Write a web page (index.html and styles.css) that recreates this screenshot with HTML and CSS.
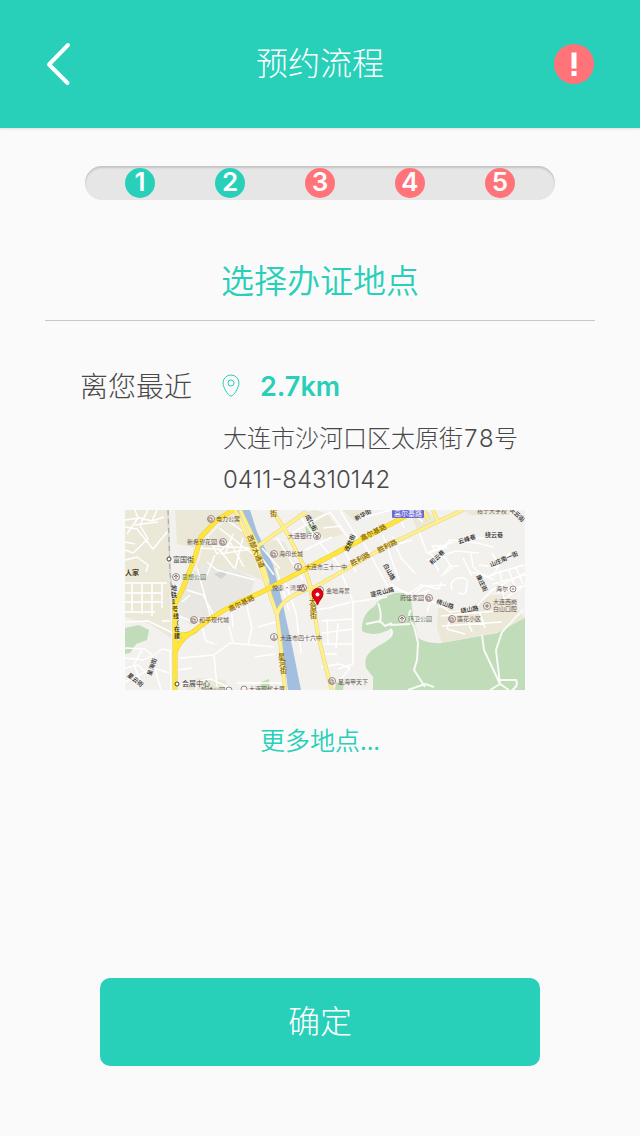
FILE: index.html
```html
<!DOCTYPE html>
<html lang="zh-CN">
<head>
<meta charset="utf-8">
<meta name="viewport" content="width=device-width, initial-scale=1">
<title>预约流程</title>
<link rel="stylesheet" href="styles.css">
</head>
<body>
<header class="topbar">
  <button class="icon-button" type="button" aria-label="返回">
    <svg width="28" height="46" viewBox="0 0 28 46"><path class="chevron" d="M22 4 3 23.500 21.500 42"/></svg>
  </button>
  <h1 class="topbar-title">预约流程</h1>
  <button class="icon-button" type="button" aria-label="提示">
    <svg width="40" height="40" viewBox="0 0 40 40"><circle class="alert-disc" cx="20" cy="20" r="20"/><path fill="#fff" d="M17.500 8.500h5v16h-5zM17.500 27h5v5h-5z"/></svg>
  </button>
</header>
<main class="content">
  <ol class="steps">
    <li class="step step-done">1</li>
    <li class="step step-done">2</li>
    <li class="step">3</li>
    <li class="step">4</li>
    <li class="step">5</li>
  </ol>
  <h2 class="heading">选择办证地点</h2>
  <section class="place">
    <h3 class="place-label">离您最近</h3>
    <div class="place-detail">
      <p class="distance">
        <svg class="pin" width="18" height="24" viewBox="0 0 18 24"><path d="M9 22C6 22 1 13 1 9a8 8 0 0 1 16 0c0 4-5 13-8 13z"/><circle cx="9" cy="9" r="3"/></svg>
        <span class="distance-value">2.7km</span>
      </p>
      <p class="address">大连市沙河口区太原街78号</p>
      <p class="phone">0411-84310142</p>
    </div>
  </section>
  <svg class="map" viewBox="0 0 400 180" role="img" aria-label="地图">
    <rect width="400" height="180" fill="#f3f1ee"/>
    <g fill="#ebe8d8">
      <path d="M0 0H43L46 128 25 114 0 107z"/>
      <path d="M50 0H105L87 14 72 38 52 34z"/>
      <path d="M80 30 108 3 113 4 137 70 109 58 72 57z"/>
      <path d="M133 38 147 30 160 32 172 60 152 70zM186 12 202 4 218 24 200 30zM172 4 190 0 200 3 187 10zM218 0H248L230 12z"/>
      <path d="M313 98 340 100 366 85H382L400 108 382 120 317 133 312 118z"/>
      <path d="M338 0H385V5H345zM285 3 304 2 312 12 292 20z"/>
      <path d="M62 176 72 168 100 170 104 180H62z"/>
    </g>
    <path fill="#e8e7e2" d="M72 57 109 58 130 69 126 83 82 106 66 115 54 105 53 92 61 75z"/>
    <path fill="#d4d4d2" d="M89 64 101 60 101 65 96 69z"/>
    <g fill="#c1dcb8">
      <path d="M0 118 14 115 24 120 22 130 11 134 5 143 0 144z"/>
      <path d="M270 83H285L288 105 293 128Q302 134 317 133L372 123 400 108V180H248V167L241 158Q237 144 255 135T266 119Q248 128 237 121 236 104 250 96 252 89 270 83z"/>
      <path d="M136 172 144 169 145 180H135zM211 172 219 173 218 180H210zM180 13 190 15 189 24 181 23z"/>
    </g>
    <path fill="#a3bfdf" d="M112 0H125L132 22 148 55 158 95 168 140 176 180H163L158 140 152 110 142 62 130 30z"/>
    <g class="lane">
      <path d="M0 10 15 8 27 11 39 7M10 0 13 8 2 24M0 17 12 19 28 39 43 21M10 15 33 12M23 0 15 15 23 29 8 43 0 40M0 50 12 47 23 55 21 62M0 62 4 64M32 0 27 11M0 32 10 34"/>
      <path d="M0 73H42M0 83H37M0 92H36M0 102H30M7 74V102M17 73V104M27 73V106M37 73V98M0 112 23 111 50 124M37 111H45"/>
      <path d="M0 138 20 139 27 145 29 157M0 148 18 150 28 146M0 158 13 155 23 165M17 140 9 154 16 174M29 145 37 139 47 141M25 157 44 163M0 172 24 160M30 158 36 180M45 140 46 180"/>
      <path d="M72 38 94 39 109 58M83 27 92 44 105 32 119 57M94 18 128 44M103 11 132 31M88 36 125 38M95 44 133 38M108 24 100 44M118 28 110 59M72 58 86 108M62 80 78 85 89 105M82 52 92 60 130 70M57 92 65 85M54 106 66 111 78 107M90 45 82 65"/>
      <path d="M55 148 89 145 105 133 149 137M89 145 92 177M77 117 81 131 90 134M104 116 108 132M52 160 67 158M56 174 86 169 105 178M112 173H158M71 171V180M122 96 127 118 123 135M106 97 108 117"/>
      <path d="M136 47 149 65M137 38 155 59M152 28 178 70M165 24 205 2 227 33M180 40 207 27M174 5 197 36 210 50M198 18 217 16M215 0 233 30M230 10 266 0M160 72 171 103 176 143M151 58 164 100M130 147 150 144M133 117 151 112M206 41 215 59 228 92M218 38 231 62M236 28 263 77 287 84M258 25 274 70M270 35 287 30M228 92 262 87M228 92V154L213 159M226 92 203 98M191 100 209 97M196 111 228 109M197 123 228 119M198 134 228 134M200 144 212 144M213 113 211 138M196 157 214 154 225 158 213 173M202 109 203 133M179 126 193 132"/>
      <path d="M267 26 276 48 290 63M272 0 279 18M284 0 298 12M293 19 302 43 322 37M304 43 322 34 338 29 373 27M303 42 310 48 331 41 354 43M318 38 325 30 352 33 369 37M310 40 307 36 322 36M302 50 320 47 327 58 316 66M307 49 314 61M338 48 347 66M346 43 348 57 360 67 369 65 374 55 367 43M354 55 371 57 385 43M365 65 399 55M375 60 379 89 400 75M368 74 400 65M372 83 397 76M384 60 391 80M391 57 398 74"/>
      <path d="M265 74 284 85 312 93M285 83 296 75 314 79 316 72M290 83 298 76 321 75M293 84 305 80M300 82 305 93 302 102M312 93 325 102 349 99 367 80 400 63M318 64 325 56 334 56M327 80Q324 70 334 68T342 77 333 82M344 62 356 64 369 70M316 106 371 101M317 116 377 112M325 108 322 119 340 124M341 106 347 122M355 103 360 118"/>
    </g>
    <g class="path-green">
      <path d="M253 93Q258 107 254 113M241 114 255 111 260 116 267 113M286 100Q281 105 289 116L293 133 292 150 289 160 300 177M265 115 285 114M265 127Q269 121 265 119M283 180 300 174 309 177M357 125 359 140 375 174 365 180M398 100 390 108 377 122 371 140 375 174M374 170 391 170Q394 176 387 180M375 174 384 180"/>
    </g>
    <path class="rail" d="M43 0 45 62 50 118 51 180"/>
    <path class="rail-dash" d="M43 0 45 62 50 118 51 180"/>
    <g class="road-case">
      <path d="M130 38 181 2M110 0 135 55 152 105M147 0 162 23 180 58 185 75 193 125 202 162 207 180M338 0 265 34 190 77Q155 87 152 105L155 128 160 180M299 0 303 10M308 0 313 12M115 0 131 33 143 72"/>
    </g>
    <g class="road-light">
      <path d="M130 38 181 2M110 0 135 55 152 105M147 0 162 23 180 58 185 75 193 125 202 162 207 180M338 0 265 34 190 77Q155 87 152 105L155 128 160 180M299 0 303 10M308 0 313 12M115 0 131 33 143 72"/>
    </g>
    <path class="main-case" d="M108 0 90 12 76 27 69 50 58 78 50 94V180M50 124Q64 128 74 117 98 98 135 83L173 63 230 33 292 0M50 144Q52 133 64 124"/>
    <path class="main" d="M108 0 90 12 76 27 69 50 58 78 50 94V180M50 124Q64 128 74 117 98 98 135 83L173 63 230 33 292 0M50 144Q52 133 64 124"/>
    <g class="marks">
      <circle cx="86" cy="9" r="3.500"/><circle cx="98" cy="32" r="3.500"/><circle cx="51" cy="67" r="3.500"/><circle cx="69" cy="110" r="3.500"/>
      <circle cx="192" cy="26" r="3.500"/><circle cx="149" cy="44" r="3.500"/><circle cx="173" cy="57" r="3.500"/><circle cx="178" cy="78" r="3.500"/><circle cx="195" cy="80" r="3.500"/><circle cx="149" cy="127" r="3.500"/><circle cx="207" cy="171" r="3.500"/>
      <circle cx="304" cy="88" r="3.500"/><circle cx="277" cy="109" r="3.500"/><circle cx="327" cy="109" r="3.500"/><circle cx="362" cy="96" r="3.500"/><circle cx="388" cy="79" r="3"/>
      <circle cx="104" cy="180" r="3"/><circle cx="119" cy="179" r="3"/>
    </g>
    <path class="glyphs" d="M84 7v4h4M86 7v2h2M96 30v4h4M98 30v2h2M67 108v4h4M69 108v2h2M147 42v4h4M149 42v2h2M205 169v4h4M207 169v2h2M302 86v4h4M304 86v2h2M325 107v4h4M327 107v2h2M190 24l2 2 2-2M190 27h4M192 26v3M171 59h4M173 55v3M147 129h4M149 125v3M176 80h4l-2-5zM193 82l2-4 2 4M360 96h4M362 94v4M388 78v2M51 65v4M49 67l2-2 2 2M277 107v4M275 109l2-2 2 2"/>
    <g class="stations"><circle cx="44" cy="49" r="2"/><circle cx="52" cy="174" r="2"/></g>
    <g class="labels">
      <text x="91" y="11">电力公寓</text><text x="62" y="34">新希望花园</text><text x="57" y="69" fill="#5d7b5c">思想公园</text><text x="74" y="112">和平现代城</text>
      <text x="163" y="28">大连银行</text><text x="154" y="46">海印长城</text><text x="180" y="59">大连市三十一中</text><text x="147" y="80">悦泰·湾里</text><text x="201" y="83">金地海景</text><text x="155" y="130">大连市四十六中</text><text x="213" y="174">星海甲天下</text>
      <text x="275" y="90">府佳家园</text><text x="283" y="111" fill="#5d7b5c">环卫公园</text><text x="332" y="111">莲花小区</text><text x="371" y="81">海尔</text><text x="368" y="94">大连西岗</text><text x="368" y="101">白山口腔</text><text x="352" y="3">格宁大学校</text><text x="76" y="182">锦绣公园</text><text x="124" y="181">大连现代大厦</text>
      <text class="label-stop" x="48" y="52">富国街</text><text class="label-stop" x="57" y="176">会展中心</text>
      <text class="label-area" x="0" y="65">人家</text>
    </g>
    <g class="streets">
      <text transform="translate(2 166) rotate(38)">星云街</text><text transform="translate(26 166) rotate(-70)">星海街</text>
      <text transform="translate(180 6) rotate(62)">成仁街</text><text transform="translate(231 11) rotate(-28)">新华街</text><text transform="translate(223 42) rotate(-65)">连胜街</text><text transform="translate(258 55) rotate(61)">白山路</text><text transform="translate(246 87) rotate(-14)">莲花山路</text>
      <text transform="translate(307 55) rotate(-43)">和云巷</text><text transform="translate(334 34) rotate(-18)">云峰巷</text><text x="360" y="27">绕云巷</text><text transform="translate(366 57) rotate(-23)">山庄南一街</text><text transform="translate(351 66) rotate(64)">康庄街</text><text transform="translate(311 93) rotate(20)">绕山路</text><text transform="translate(336 103) rotate(-10)">绕山路</text><text transform="translate(384 0) rotate(43)">长云街</text>
      <text x="46" y="80">地</text><text x="46" y="87">铁</text><text x="47" y="94">1</text><text x="47" y="101">号</text><text x="48" y="108">线</text><text x="48" y="115">（</text><text x="49" y="121">在</text><text x="49" y="128">建</text>
    </g>
    <g class="roads">
      <text transform="translate(105 102) rotate(-27)">高尔基路</text><text transform="translate(237 31) rotate(-27)">高尔基路</text><text transform="translate(227 56) rotate(-28)">胜利路</text><text transform="translate(254 43) rotate(-27)">胜利路</text>
      <text transform="translate(122 26) rotate(68)">西部大通道</text><text x="145" y="6">街</text>
      <text x="184" y="94">太</text><text x="185" y="101">原</text><text x="185" y="108">街</text>
      <text x="153" y="149">星</text><text x="154" y="156">河</text><text x="155" y="163">街</text>
    </g>
    <rect x="267" y="0" width="32" height="8" rx="1" fill="#6b6cd2"/><text class="badge" x="269" y="6">高尔基路</text>
    <path class="marker" d="M192.500 95C191 90 187 88 187 84a5.500 5.500 0 0 1 11 0c0 4-4 6-5.500 11z"/><circle cx="192.500" cy="84.500" r="2" fill="#fff"/>
  </svg>
  <a class="more" href="#more">更多地点...</a>
  <button class="confirm" type="button">确定</button>
</main>
</body>
</html>
```
FILE: styles.css
```css
* { box-sizing: border-box; }
body, h1, h2, h3, p, ol { margin: 0; padding: 0; font-weight: 300; }
body {
  min-height: 100vh;
  display: flex;
  flex-direction: column;
  background: #fafafa;
  color: #484848;
  font-family: "Noto Sans CJK SC", sans-serif;
  font-weight: 300;
}
button { font: inherit; border: 0; padding: 0; cursor: pointer; }
svg { display: block; }
.topbar {
  height: 128px;
  padding: 0 46px;
  display: grid;
  grid-template-columns: 40px 1fr 40px;
  align-items: center;
  background: #28cfb9;
  color: #fff;
  box-shadow: 0 1px 2px #ddd;
}
.topbar-title { padding-bottom: 6px; font-size: 32px; line-height: 48px; text-align: center; }
.icon-button { background: none; }
.chevron { fill: none; stroke: #fff; stroke-width: 4; stroke-linecap: round; stroke-linejoin: round; }
.alert-disc { fill: #ff7379; }
.content { flex: 1; display: flex; flex-direction: column; padding: 38px 45px 70px; }
.steps {
  list-style: none;
  display: flex;
  justify-content: space-between;
  margin: 0 40px;
  padding: 2px 40px;
  border-radius: 17px;
  background: #e6e6e6;
  box-shadow: inset 0 2px 2px #c4c4c4;
}
.step {
  width: 30px;
  height: 30px;
  border-radius: 50%;
  background: #ff7379;
  color: #fff;
  font: 600 26px/28px Inter, sans-serif;
  text-align: center;
}
.step-done { background: #28cfb9; }
.heading {
  margin-top: 55px;
  padding-bottom: 17px;
  border-bottom: 1px solid #c8c8c8;
  color: #28cfb9;
  font-size: 33px;
  line-height: 48px;
  font-weight: 350;
  text-align: center;
}
.place { display: grid; grid-template-columns: 142px 1fr; margin: 44px 0 0 35px; }
.place-label { font-size: 28px; line-height: 40px; }
.distance { display: flex; align-items: center; gap: 20px; color: #28cfb9; font: 600 27px/40px Inter, sans-serif; }
.distance-value { padding-top: 2px; }
.pin { fill: none; stroke: #28cfb9; stroke-width: 1; }
.address, .phone { font-family: Inter, "Noto Sans CJK SC", sans-serif; padding-left: 1px; }
.address { margin-top: 14px; font-size: 24px; line-height: 36px; font-variant-numeric: tabular-nums; }
.phone { margin-top: 7px; font-size: 24px; line-height: 32px; }
.map { width: calc(100% - 150px); margin: 14px 70px 0 80px; }
.lane, .path-green, .rail, .rail-dash, .road-case, .road-light, .main-case, .main { fill: none; }
.lane { stroke: #fff; stroke-width: 1.500; stroke-linejoin: round; }
.path-green { stroke: #f7faf5; stroke-width: 2; stroke-linejoin: round; }
.rail { stroke: #d9d9d9; stroke-width: 2; }
.rail-dash { stroke: #a5a5a5; stroke-width: 1; stroke-dasharray: 5 4; }
.road-case { stroke: #e2d48c; stroke-width: 4; }
.road-light { stroke: #fff08a; stroke-width: 3; }
.main-case { stroke: #e5ca4c; stroke-width: 5; }
.main { stroke: #ffe639; stroke-width: 4; }
.marks { fill: #f7f2f0; stroke: #998886; stroke-width: 1; }
.glyphs { fill: none; stroke: #866e6b; stroke-width: 1; }
.stations { fill: #fff; stroke: #444; stroke-width: 1; }
.labels, .streets, .roads, .badge { font-size: 6px; font-weight: 400; }
.labels { fill: #65534f; }
.labels .label-stop { font-size: 7px; fill: #444; }
.labels .label-area { font-size: 7px; font-weight: 700; fill: #4d3d22; }
.streets { fill: #222; font-weight: 500; }
.roads { font-size: 7px; font-weight: 500; fill: #896400; }
.badge { font-size: 7px; fill: #fff; }
.marker { fill: #e50012; stroke: #b70010; stroke-width: 1; }
.more { align-self: center; margin-top: 31px; color: #28cfb9; font-size: 25px; line-height: 36px; font-weight: 350; text-decoration: none; }
.confirm {
  height: 88px;
  margin: auto 55px 0;
  padding-bottom: 6px;
  border-radius: 10px;
  background: #28cfb9;
  color: #fff;
  font-size: 32px;
}
```
